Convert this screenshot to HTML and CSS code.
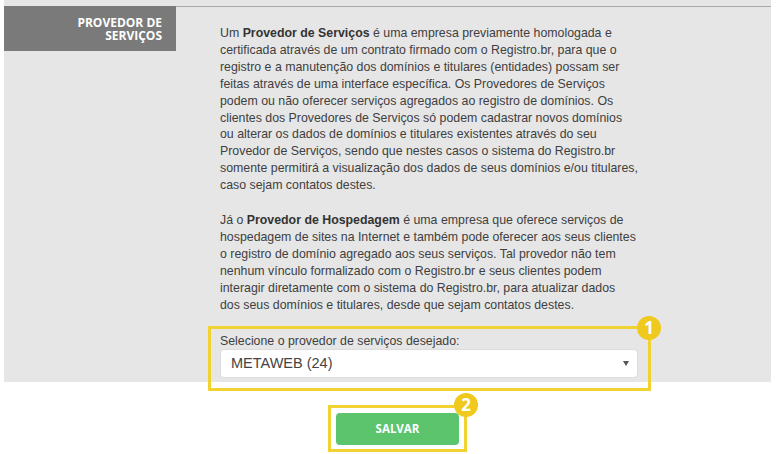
FILE: index.html
```html
<!DOCTYPE html>
<html lang="pt-BR">
<head>
    <meta charset="UTF-8">
    <meta name="viewport" content="width=device-width, initial-scale=1.0">
    <title>Provedor de Serviços</title>
    <link rel="stylesheet" href="styles.css">
</head>
<body>
    <div class="page">
        <div class="panel">
            <div class="panel-row">
                <div class="section-label">PROVEDOR DE<br>SERVIÇOS</div>
                <div class="section-body">
                    <p>Um <b>Provedor de Serviços</b> é uma empresa previamente homologada e certificada através de um contrato firmado com o Registro.br, para que o registro e a manutenção dos domínios e titulares (entidades) possam ser feitas através de uma interface específica. Os Provedores de Serviços podem ou não oferecer serviços agregados ao registro de domínios. Os clientes dos Provedores de Serviços só podem cadastrar novos domínios ou alterar os dados de domínios e titulares existentes através do seu Provedor de Serviços, sendo que nestes casos o sistema do Registro.br somente permitirá a visualização dos dados de seus domínios e/ou titulares, caso sejam contatos destes.</p>
                    <p>Já o <b>Provedor de Hospedagem</b> é uma empresa que oferece serviços de hospedagem de sites na Internet e também pode oferecer aos seus clientes o registro de domínio agregado aos seus serviços. Tal provedor não tem nenhum vínculo formalizado com o Registro.br e seus clientes podem interagir diretamente com o sistema do Registro.br, para atualizar dados dos seus domínios e titulares, desde que sejam contatos destes.</p>

                    <div class="highlight select-group">
                        <span class="badge">1</span>
                        <label class="field-label">Selecione o provedor de serviços desejado:</label>
                        <div class="select">
                            <span>METAWEB (24)</span>
                            <span class="caret"></span>
                        </div>
                    </div>
                </div>
            </div>
        </div>

        <div class="actions">
            <div class="highlight save-group">
                <span class="badge">2</span>
                <button class="btn-save">SALVAR</button>
            </div>
        </div>
    </div>
</body>
</html>
```

FILE: styles.css
```css
body {
    margin: 0;
    font-family: "Liberation Sans", Arial, sans-serif;
    font-size: 12.35px;
    color: #404040;
    background-color: #ffffff;
}
.page {
    width: 767px;
    margin-left: 4px;
}
.panel {
    background-color: #e6e6e6;
    padding-top: 6px;
}
.panel-row {
    display: flex;
    border-top: 1px solid #a9a9a9;
}
.section-label {
    flex: none;
    display: flex;
    flex-direction: column;
    justify-content: center;
    width: 158px;
    height: 45px;
    margin-top: -1px;
    padding-right: 14px;
    background-color: #7a7a7a;
    color: #ffffff;
    font-family: "Open Sans", sans-serif;
    font-weight: 700;
    font-size: 12px;
    line-height: 13px;
    text-align: right;
}
.section-body {
    width: 418px;
    margin-left: 44px;
    padding-top: 18px;
}
.section-body p {
    margin: 0 0 18px 0;
    line-height: 16.9px;
}
.section-body p + p {
    margin-bottom: 12px;
}
.section-body b {
    color: #333;
}
.highlight {
    position: relative;
    border: 3px solid #f2d230;
}
.badge {
    position: absolute;
    width: 24px;
    height: 24px;
    border-radius: 50%;
    background-color: #f0c91f;
    color: #ffffff;
    font-family: "Open Sans", sans-serif;
    font-weight: 700;
    font-size: 17px;
    line-height: 24px;
    text-align: center;
}
.select-group {
    margin: 0 -13px -9px -12px;
    padding: 5px 10px 10px 9px;
}
.select-group .badge {
    top: -13px;
    right: -13px;
}
.field-label {
    display: block;
    line-height: 15px;
}
.select {
    display: flex;
    align-items: center;
    justify-content: space-between;
    height: 29px;
    box-sizing: border-box;
    padding: 0 8px 0 10px;
    background-color: #ffffff;
    border: 1px solid #dcdcdc;
    border-radius: 4px;
    font-size: 14.5px;
    color: #444;
}
.caret {
    width: 0;
    height: 0;
    border-left: 3px solid transparent;
    border-right: 3px solid transparent;
    border-top: 5px solid #555;
}
.actions {
    padding-top: 23px;
    padding-left: 324px;
}
.save-group {
    display: inline-block;
    padding: 5px 5px 4px 5px;
}
.save-group .badge {
    top: -15px;
    right: -14px;
}
.btn-save {
    display: block;
    width: 123px;
    height: 32px;
    border: none;
    border-radius: 4px;
    background-color: #5bc46d;
    color: #ffffff;
    font-family: "Open Sans", sans-serif;
    font-weight: 700;
    font-size: 11.5px;
    cursor: pointer;
}
```
